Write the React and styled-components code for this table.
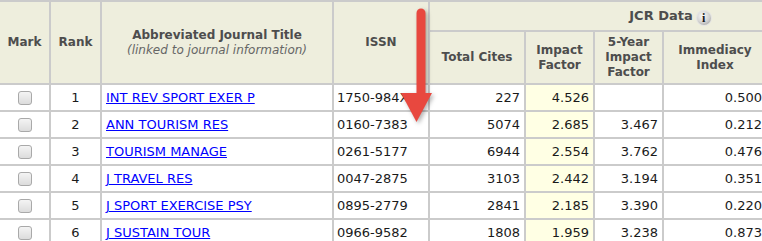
import React from 'react'
import styled, { createGlobalStyle } from 'styled-components'

const GlobalStyle = createGlobalStyle`
  body {
    margin: 0;
    background: #fff;
    overflow: hidden;
    font-family: "DejaVu Sans", Verdana, sans-serif;
  }
`

const Page = styled.div`
  position: relative;
  width: 762px;
  height: 241px;
  overflow: hidden;
`

const Table = styled.table`
  margin-left: -2px;
  border-collapse: separate;
  border-spacing: 2px;
  background: #cbcbcb;
  table-layout: fixed;
  width: 914px;
  font-size: 13px;
`

const Head = styled.th`
  box-sizing: border-box;
  background: #eeeedd;
  color: #4d4d4d;
  font-weight: bold;
  font-size: ${p => p.$fs || '12px'};
  line-height: 15px;
  text-align: center;
  vertical-align: middle;
  padding: 0 3px;
  height: ${p => p.$h || 'auto'};
`

const Sub = styled.div`
  font-weight: normal;
  font-style: italic;
  color: #666;
`

const Info = styled.span`
  display: inline-block;
  width: 14px;
  height: 14px;
  margin-left: 4px;
  vertical-align: -2px;
  border-radius: 50%;
  background: radial-gradient(circle at 40% 35%, #fafafa 0%, #d0d0d0 55%, #8e8e8e 100%);
  box-shadow: 0 0 0 1px #e4e4e4;
  color: #1a1a1a;
  font-size: 12px;
  line-height: 14px;
  font-weight: bold;
  font-family: "Liberation Serif", serif;
  text-align: center;
`

const Cell = styled.td`
  box-sizing: border-box;
  height: 25px;
  padding: 0 4px;
  background: ${p => (p.$hl ? '#ffffe4' : '#fff')};
  color: #1a1a1a;
  text-align: ${p => p.$align || 'left'};
  vertical-align: middle;
  white-space: nowrap;
  overflow: hidden;
`

const Box = styled.span`
  display: inline-block;
  width: 12px;
  height: 12px;
  vertical-align: middle;
  border: 1px solid #a9a9a9;
  border-radius: 3px;
  background: linear-gradient(#f4f4f4, #dcdcdc);
`

const Link = styled.a`
  color: #0000ff;
  text-decoration: underline;
`

const Arrow = styled.svg`
  position: absolute;
  left: 398px;
  top: 4px;
  filter: drop-shadow(2px 2px 2px rgba(0, 0, 0, 0.3));
`

// last two columns lie past the window's right edge
const widths = [49, 49, 230, 94, 94, 67, 67, 102, 70, 70]

const rows = [
  ['1', 'INT REV SPORT EXER P', '1750-984X', '227', '4.526', '', '0.500'],
  ['2', 'ANN TOURISM RES', '0160-7383', '5074', '2.685', '3.467', '0.212'],
  ['3', 'TOURISM MANAGE', '0261-5177', '6944', '2.554', '3.762', '0.476'],
  ['4', 'J TRAVEL RES', '0047-2875', '3103', '2.442', '3.194', '0.351'],
  ['5', 'J SPORT EXERCISE PSY', '0895-2779', '2841', '2.185', '3.390', '0.220'],
  ['6', 'J SUSTAIN TOUR', '0966-9582', '1808', '1.959', '3.238', '0.873'],
]

export default function App() {
  return (
    <Page>
      <GlobalStyle />
      <Table>
        <colgroup>
          {widths.map((w, i) => <col key={i} style={{ width: w }} />)}
        </colgroup>
        <thead>
          <tr>
            <Head rowSpan={2}>Mark</Head>
            <Head rowSpan={2}>Rank</Head>
            <Head rowSpan={2}>
              Abbreviated Journal Title
              <Sub>(linked to journal information)</Sub>
            </Head>
            <Head rowSpan={2}>ISSN</Head>
            <Head colSpan={6} $h="28px" $fs="13px">
              JCR Data<Info>i</Info>
            </Head>
          </tr>
          <tr>
            <Head $h="51px">Total Cites</Head>
            <Head>Impact Factor</Head>
            <Head>5-Year Impact Factor</Head>
            <Head>Immediacy Index</Head>
            <Head />
            <Head />
          </tr>
        </thead>
        <tbody>
          {rows.map(r => (
            <tr key={r[0]}>
              <Cell $align="center"><Box /></Cell>
              <Cell $align="center">{r[0]}</Cell>
              <Cell><Link href="#">{r[1]}</Link></Cell>
              <Cell style={{ paddingLeft: 3 }}>{r[2]}</Cell>
              <Cell $align="right">{r[3]}</Cell>
              <Cell $align="right" $hl>{r[4]}</Cell>
              <Cell $align="right">{r[5]}</Cell>
              <Cell $align="right">{r[6]}</Cell>
              <Cell />
              <Cell />
            </tr>
          ))}
        </tbody>
      </Table>
      <Arrow width="40" height="124" viewBox="0 0 40 124">
        <path d="M18.5 9 a4.5 4.5 0 0 1 9 0 V90 h-9 Z" fill="#e8483f" />
        <path d="M3 89 H34 L18.5 118 Z" fill="#e8483f" />
      </Arrow>
    </Page>
  )
}
